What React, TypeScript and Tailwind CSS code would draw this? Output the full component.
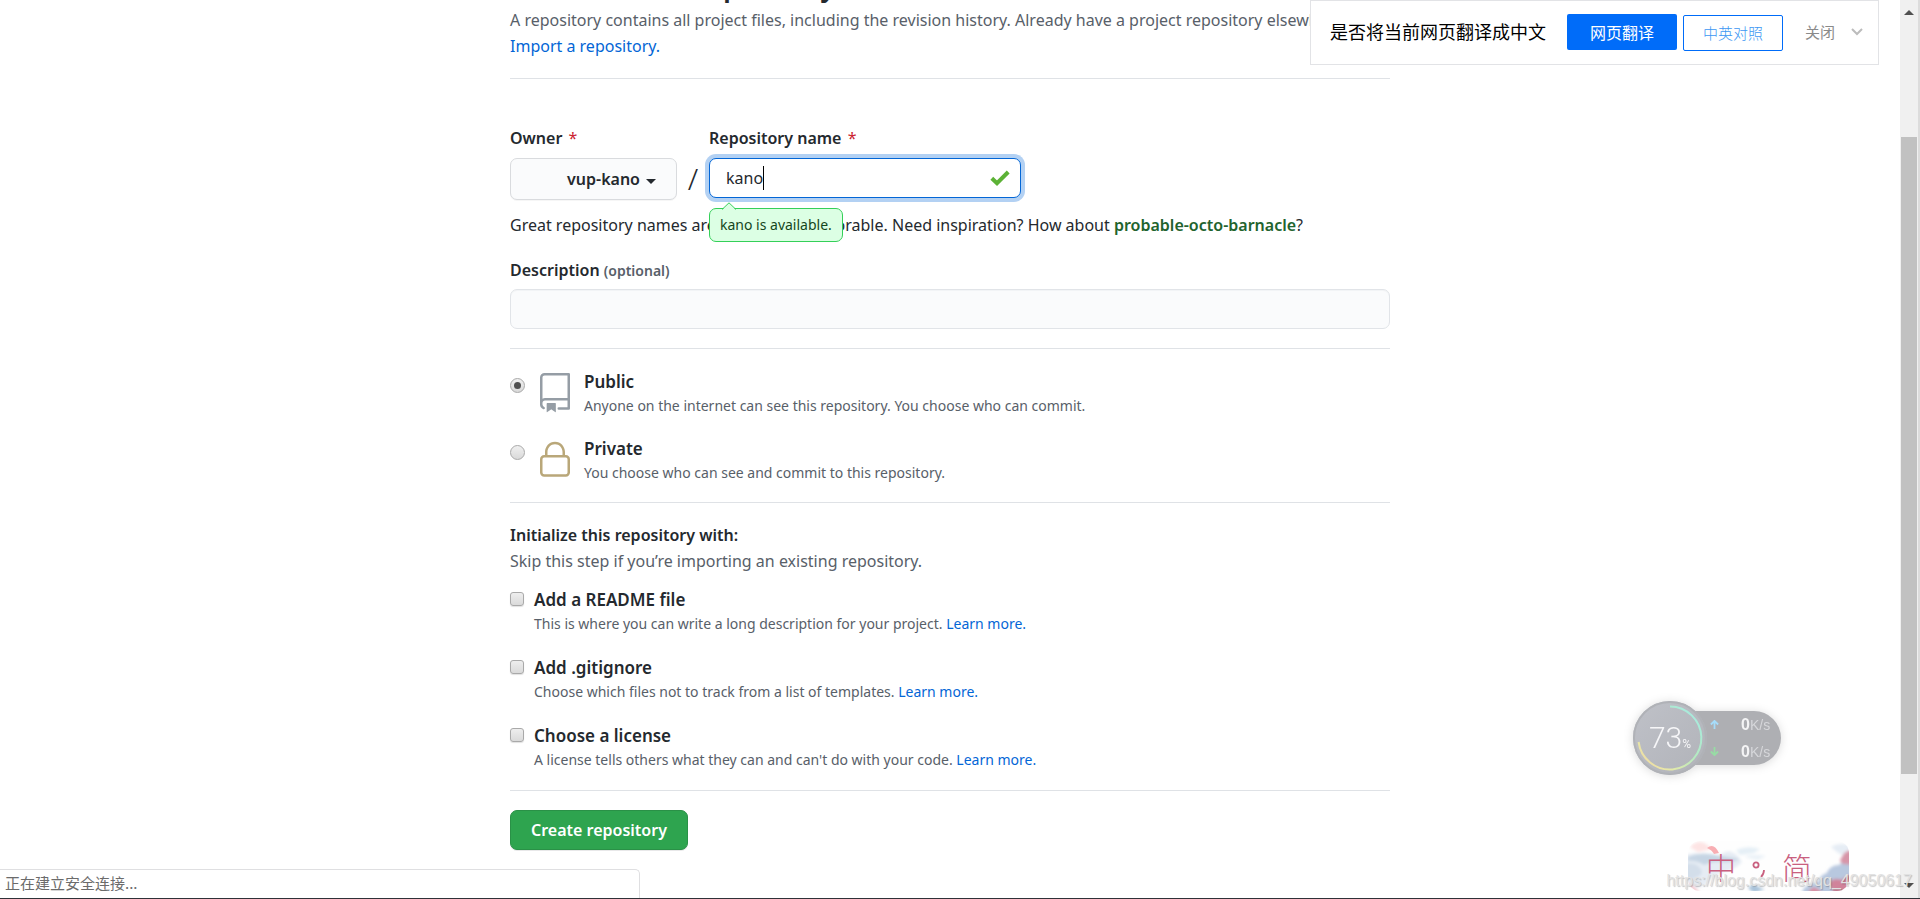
import { useState } from "react";
import type { ReactNode } from "react";

const REPO_PATHS = [
  "M3 2.75A2.75 2.75 0 015.75 0h14.5a.75.75 0 01.75.75v20.5a.75.75 0 01-.75.75h-6a.75.75 0 010-1.5h5.25v-4H6A1.5 1.5 0 004.5 18v.75c0 .716.43 1.334 1.05 1.605a.75.75 0 01-.6 1.374A3.25 3.25 0 013 18.75v-16zM19.5 1.5V15H6c-.546 0-1.059.146-1.5.401V2.75c0-.69.56-1.25 1.25-1.25H19.5z",
  "M7 18.25a.25.25 0 01.25-.25h5a.25.25 0 01.25.25v5.01a.25.25 0 01-.397.201l-2.206-1.604a.25.25 0 00-.294 0L7.397 23.46a.25.25 0 01-.397-.2v-5.01z",
];
const LOCK_PATHS = [
  "M6 9V7.25C6 3.845 8.503 1 12 1s6 2.845 6 6.25V9h.5a2.5 2.5 0 012.5 2.5v8a2.5 2.5 0 01-2.5 2.5h-13A2.5 2.5 0 013 19.5v-8A2.5 2.5 0 015.5 9H6zm1.5-1.75C7.5 4.58 9.422 2.5 12 2.5c2.578 0 4.5 2.08 4.5 4.75V9h-9V7.25zm-3 4.25a1 1 0 011-1h13a1 1 0 011 1v8a1 1 0 01-1 1h-13a1 1 0 01-1-1v-8z",
];

function Octicon({ paths, className }: { paths: string[]; className: string }) {
  return (
    <svg viewBox="0 0 24 24" className={className} fill="currentColor" fillRule="evenodd" aria-hidden="true">
      {paths.map((d) => (
        <path key={d} d={d} />
      ))}
    </svg>
  );
}

function Required() {
  return <span className="ml-[2px] font-normal text-[#cb2431]">*</span>;
}

function VisibilityOption(props: {
  id: string;
  title: string;
  note: string;
  checked: boolean;
  onSelect: () => void;
  icon: ReactNode;
}) {
  return (
    <div className="flex items-start">
      <input
        type="radio"
        name="visibility"
        id={props.id}
        checked={props.checked}
        onChange={props.onSelect}
        className="mt-[9px] grid size-[15px] shrink-0 appearance-none place-content-center rounded-full border border-[#a9a9a9] bg-linear-to-b from-[#f0f0f0] to-[#d9d9d9] before:size-[7px] before:rounded-full checked:before:bg-[#4f4f4f]"
      />
      <span className="mt-1 ml-[10px]">{props.icon}</span>
      <label htmlFor={props.id} className="ml-[9px] block">
        <span className="block text-[17px] leading-[26px] font-semibold">{props.title}</span>
        <span className="block pb-px text-sm leading-[22px] text-[#586069]">{props.note}</span>
      </label>
    </div>
  );
}

function InitOption({ id, title, note }: { id: string; title: string; note: string }) {
  return (
    <div className="flex items-start">
      <input
        type="checkbox"
        id={id}
        className="mt-[5px] size-[14px] shrink-0 appearance-none rounded-[3px] border border-[#a9a9a9] bg-linear-to-b from-[#eeeeee] to-[#dadada] shadow-[0_1px_1px_rgba(0,0,0,0.12)] checked:bg-[#4f4f4f]"
      />
      <div className="ml-[10px]">
        <label htmlFor={id} className="block text-[17px] leading-[26px] font-semibold">
          {title}
        </label>
        <p className="pb-px text-sm leading-[22px] text-[#586069]">
          {note}{" "}
          <a href="#learn" className="text-[#0366d6]">
            Learn more.
          </a>
        </p>
      </div>
    </div>
  );
}

function Rule() {
  return <hr className="border-0 border-t border-[#dfe2e6]" />;
}

function RepositoryForm() {
  const [name, setName] = useState("kano");
  const [visibility, setVisibility] = useState("public");
  return (
    <form className="mx-auto w-full max-w-[880px]" onSubmit={(e) => e.preventDefault()}>
      <h1 className="-mt-9 text-[28px] leading-[43px] font-semibold">Create a new repository</h1>
      <p className="text-base leading-[26px] whitespace-nowrap text-[#586069]">
        A repository contains all project files, including the revision history. Already have a project repository elsewhere?
        <br />
        <a href="#import" className="text-[#0366d6]">
          Import a repository.
        </a>
      </p>
      <div className="mt-[19px]">
        <Rule />
      </div>

      <div className="mt-[46px] flex items-end">
        <div className="w-[167px]">
          <label htmlFor="owner" className="block text-base leading-[26px] font-semibold">
            Owner <Required />
          </label>
          <button
            type="button"
            id="owner"
            className="mt-[7px] flex h-[42px] w-full items-center justify-end gap-[6px] rounded-[7px] border border-[#d9dbde] bg-[#fafbfc] pr-5 text-base font-semibold shadow-[0_1px_0_rgba(27,31,35,0.04)]"
          >
            vup-kano
            <svg viewBox="0 0 10 5" className="mt-1 h-[5px] w-[10px]" fill="currentColor" aria-hidden="true">
              <path d="M0 0h10L5 5z" />
            </svg>
          </button>
        </div>
        <span className="w-8 text-center text-[30px] leading-[42px] font-light">/</span>
        <div className="w-[312px]">
          <label htmlFor="repo" className="block text-base leading-[26px] font-semibold">
            Repository name <Required />
          </label>
          <div className="relative mt-[7px] mb-[2px]">
            <input
              id="repo"
              type="text"
              value={name}
              onChange={(e) => setName(e.target.value)}
              className="block h-10 w-full rounded-[7px] border border-[#0366d6] bg-white px-4 text-base caret-transparent ring-4 ring-[#0366d6]/30 outline-none"
            />
            <div className="pointer-events-none absolute inset-y-2 left-[17px] flex text-base">
              <span className="invisible">{name}</span>
              <span className="w-px bg-black" />
            </div>
            <svg viewBox="0 0 20 16" className="absolute top-3 right-[11px] h-4 w-5" fill="none" stroke="#5cb236" strokeWidth="4" aria-hidden="true">
              <path d="M1.8 8.2l5.2 5L18.2 2" />
            </svg>
            <div className="absolute top-[50px] left-0 flex h-[34px] items-center rounded-[7px] border border-[#34d058] bg-[#dcffe4] px-[10px] text-sm whitespace-nowrap text-[#144620]">
              {name} is available.
              <svg viewBox="0 0 14 8" className="absolute -top-[7px] left-3 h-2 w-[14px]" aria-hidden="true">
                <path d="M0 8L7 1l7 7z" fill="#dcffe4" />
                <path d="M0 7.5L7 .8l7 6.7" fill="none" stroke="#34d058" />
              </svg>
            </div>
          </div>
        </div>
      </div>

      <p className="mt-3 text-base leading-[26px]">
        Great repository names are short and memorable. Need inspiration? How about{" "}
        <strong className="font-semibold text-[#22632e]">probable-octo-barnacle</strong>?
      </p>

      <label htmlFor="description" className="mt-[19px] block text-base leading-[26px] font-semibold">
        Description <span className="text-sm font-semibold text-[#586069]">(optional)</span>
      </label>
      <input
        id="description"
        type="text"
        className="mt-[6px] block h-10 w-full rounded-[7px] border border-[#e1e4e8] bg-[#fafbfc] px-4 text-base shadow-[inset_0_1px_0_rgba(225,228,232,0.3)]"
      />
      <div className="mt-[19px]">
        <Rule />
      </div>

      <fieldset className="mt-5 flex flex-col gap-[18px]">
        <VisibilityOption
          id="public"
          title="Public"
          note="Anyone on the internet can see this repository. You choose who can commit."
          checked={visibility === "public"}
          onSelect={() => setVisibility("public")}
          icon={<Octicon paths={REPO_PATHS} className="size-10 text-[#959da5]" />}
        />
        <VisibilityOption
          id="private"
          title="Private"
          note="You choose who can see and commit to this repository."
          checked={visibility === "private"}
          onSelect={() => setVisibility("private")}
          icon={<Octicon paths={LOCK_PATHS} className="size-10 text-[#b9a779]" />}
        />
      </fieldset>
      <div className="mt-[17px]">
        <Rule />
      </div>

      <h2 className="mt-[19px] text-base leading-[26px] font-semibold">Initialize this repository with:</h2>
      <p className="text-base leading-[26px] text-[#586069]">Skip this step if you’re importing an existing repository.</p>
      <div className="mt-[13px] flex flex-col gap-[19px]">
        <InitOption id="readme" title="Add a README file" note="This is where you can write a long description for your project." />
        <InitOption id="gitignore" title="Add .gitignore" note="Choose which files not to track from a list of templates." />
        <InitOption id="license" title="Choose a license" note="A license tells others what they can and can't do with your code." />
      </div>
      <div className="mt-[18px]">
        <Rule />
      </div>
      <button
        type="submit"
        className="mt-[19px] h-10 rounded-[7px] border border-[#2a9147] bg-[#2ea44f] px-5 text-base font-semibold text-white shadow-[0_1px_0_rgba(27,31,35,0.1)]"
      >
        Create repository
      </button>
    </form>
  );
}

function TranslateBar() {
  return (
    <div className="absolute top-0 right-[41px] flex h-[65px] w-[569px] items-start border border-[#e2e3e6] bg-white pl-[19px] font-['Noto_Sans_CJK_SC',sans-serif]">
      <span className="mt-3 w-[237px] text-[18px] leading-9 whitespace-nowrap text-black">是否将当前网页翻译成中文</span>
      <button type="button" className="mt-[13px] h-9 w-[110px] rounded-[2px] bg-[#006cf9] text-base text-white">
        网页翻译
      </button>
      <button type="button" className="mt-[14px] ml-[6px] h-9 w-[100px] rounded-[2px] border border-[#006cf9] bg-white text-[15px] font-light text-[#3c97f3]">
        中英对照
      </button>
      <button type="button" className="mt-[13px] ml-[22px] flex h-9 items-center gap-4 text-[15px] text-[#8a8a8a]">
        关闭
        <svg viewBox="0 0 12 8" className="h-2 w-3" fill="none" stroke="#bcbcbc" strokeWidth="2" aria-hidden="true">
          <path d="M1 1l5 5 5-5" />
        </svg>
      </button>
    </div>
  );
}

function SpeedRow({ down }: { down?: boolean }) {
  return (
    <div className="flex h-[27px] items-center">
      <svg viewBox="0 0 10 10" className="size-[9px]" fill="none" stroke={down ? "#97dca4" : "#a6dcfa"} strokeWidth="2" aria-hidden="true">
        <path d={down ? "M5 0v9M1 5l4 4 4-4" : "M5 10V1M1 5l4-4 4 4"} />
      </svg>
      <span className="ml-[22px] text-base font-bold text-[#f4f4f5]">0</span>
      <span className="text-sm text-[#d6d7da]">K/s</span>
    </div>
  );
}

function SpeedMeter() {
  return (
    <div className="absolute right-[139px] bottom-[123px] flex items-center font-['Liberation_Sans',sans-serif] drop-shadow-[0_1px_5px_rgba(0,0,0,0.14)]">
      <div className="relative z-10 -mr-10 flex size-[74px] items-center justify-center rounded-full bg-linear-to-br from-[#bfc1c8] to-[#b1b3b9]">
        <svg viewBox="0 0 74 74" className="absolute inset-0 size-full" fill="none" aria-hidden="true">
          <defs>
            <linearGradient id="ring" x1="1" y1="0" x2="0" y2="1">
              <stop offset="0" stopColor="#a4ebe8" />
              <stop offset="0.45" stopColor="#b4eac0" />
              <stop offset="0.75" stopColor="#e6e9a8" />
              <stop offset="1" stopColor="#f5d3a2" />
            </linearGradient>
          </defs>
          <circle cx="37" cy="37" r="36" stroke="#b0b2b7" strokeWidth="2" />
          <path d="M37 5.500A31.500 31.500 0 1 1 5.600 41" stroke="url(#ring)" strokeWidth="2" />
        </svg>
        <span className="relative flex items-baseline font-['Roboto',sans-serif] text-[#f6f6f8]">
          <span className="text-[30px] leading-none font-light">73</span>
          <span className="text-xs">%</span>
        </span>
      </div>
      <div className="w-[114px] rounded-r-[27px] bg-[#aeafb3] pl-[43px]">
        <SpeedRow />
        <SpeedRow down />
      </div>
    </div>
  );
}

function InputMethodBar() {
  return (
    <div className="absolute right-[71px] bottom-[7px] h-[50px] w-[161px] overflow-hidden rounded-xl">
      <svg viewBox="0 0 161 50" className="absolute inset-0 size-full" aria-hidden="true">
        <defs>
          <filter id="wash" x="-20%" y="-20%" width="140%" height="140%">
            <feGaussianBlur stdDeviation="1.8" />
          </filter>
        </defs>
        <rect width="161" height="50" fill="#fefefe" />
        <g filter="url(#wash)">
          <path d="M-6 16Q8 9 16 15T34 13T54 21Q48 28 36 31T18 44Q8 48 -6 46z" fill="#e6ecf4" />
          <path d="M0 16Q12 11 22 13T52 18Q42 22 34 21T16 24Q8 19 0 20z" fill="#c6d5e4" />
          <path d="M-4 24Q6 20 12 27T4 38H-4z" fill="#d3deea" />
          <path d="M2 6Q10-2 18 3L24 8L10 11z" fill="#fde4e4" />
          <path d="M-6 42Q6 40 14 56H-6z" fill="#f5cfd4" />
          <path d="M48 9Q60 4 72 8L66 12 52 14z" fill="#e5eff6" />
          <path d="M56 16Q64 12 78 15L70 19z" fill="#ebf2f8" />
          <path d="M167 18Q156 18 151 24Q142 24 139 32Q132 34 130 41Q122 42 116 47L112 56H167z" fill="#b8c8df" />
          <path d="M143 6Q152 0 167 6V16Q154 16 149 11z" fill="#e6edf5" />
          <path d="M167 8Q155 10 154 16Q150 20 155 23L167 24z" fill="#d795a8" />
          <path d="M167 33Q158 34 154 39Q144 36 141 43L148 56H167z" fill="#d0839a" />
          <path d="M119 56Q122 44 128 47T138 56z" fill="#d78ea2" />
          <path d="M60 47Q64 42 69 45T77 48L66 52z" fill="#a9c3da" />
        </g>
        <path d="M19 7q7-6 12 5l-5 1q-2-4-7-6z" fill="#f8aeb3" />
      </svg>
      <div className="relative flex h-full items-center pl-[18px] font-['Noto_Sans_CJK_SC',sans-serif] text-[30px] font-light text-[#c9607f]">
        <span>中</span>
        <svg viewBox="0 0 14 18" className="mt-2 ml-4 h-[18px] w-[14px]" fill="none" stroke="currentColor" strokeWidth="1.8" aria-hidden="true">
          <circle cx="4" cy="4" r="2.600" />
          <path d="M12 9q0 4-3 7" />
        </svg>
        <span className="ml-4">简</span>
      </div>
    </div>
  );
}

function ScrollTrack() {
  return (
    <div className="flex w-5 shrink-0 flex-col items-center border-r-2 border-[#dcdcdc] bg-[#f0f0f0] py-[10px]">
      <svg viewBox="0 0 10 5" className="h-[5px] w-[10px]" fill="#505050" aria-hidden="true">
        <path d="M5 0l5 5H0z" />
      </svg>
      <div className="flex w-full flex-1 flex-col px-px">
        <div className="flex-[122]" />
        <div className="flex-[638] bg-[#c1c1c1]" />
        <div className="flex-[109]" />
      </div>
      <svg viewBox="0 0 10 5" className="h-[5px] w-[10px]" fill="#505050" aria-hidden="true">
        <path d="M0 0h10L5 5z" />
      </svg>
    </div>
  );
}

export default function App() {
  return (
    <div className="relative flex h-screen overflow-hidden border-b border-[#2f3238] bg-white font-['Noto_Sans','Noto_Sans_CJK_SC',sans-serif] text-[#24292e]">
      <main className="min-w-0 flex-1 overflow-hidden">
        <RepositoryForm />
      </main>
      <ScrollTrack />
      <TranslateBar />
      <SpeedMeter />
      <InputMethodBar />
      <span className="absolute right-2 bottom-[5px] font-['Liberation_Sans',sans-serif] text-base leading-6 text-[#e2e2e2] [text-shadow:1px_1px_1px_rgba(0,0,0,0.22)]">
        https://blog.csdn.net/qq_49050617
      </span>
      <div className="absolute bottom-0 left-0 h-[29px] w-1/3 rounded-tr-[5px] border-t border-r border-[#dfdfe1] bg-white pl-[5px] font-['Noto_Sans_CJK_SC',sans-serif] text-[15px] leading-[26px] text-[#6b6b6b]">
        正在建立安全连接...
      </div>
    </div>
  );
}
